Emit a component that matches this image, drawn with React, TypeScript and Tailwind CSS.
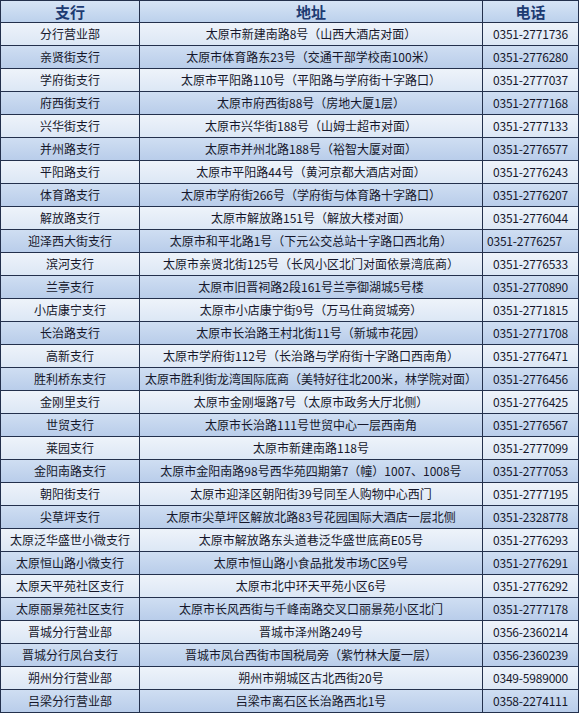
const branches: [string, string, string][] = [
  ["分行营业部", "太原市新建南路8号（山西大酒店对面）", "0351-2771736"],
  ["亲贤街支行", "太原市体育路东23号（交通干部学校南100米）", "0351-2776280"],
  ["学府街支行", "太原市平阳路110号（平阳路与学府街十字路口）", "0351-2777037"],
  ["府西街支行", "太原市府西街88号（房地大厦1层）", "0351-2777168"],
  ["兴华街支行", "太原市兴华街188号（山姆士超市对面）", "0351-2777133"],
  ["并州路支行", "太原市并州北路188号（裕智大厦对面）", "0351-2776577"],
  ["平阳路支行", "太原市平阳路44号（黄河京都大酒店对面）", "0351-2776243"],
  ["体育路支行", "太原市学府街266号（学府街与体育路十字路口）", "0351-2776207"],
  ["解放路支行", "太原市解放路151号（解放大楼对面）", "0351-2776044"],
  ["迎泽西大街支行", "太原市和平北路1号（下元公交总站十字路口西北角）", "0351-2776257"],
  ["滨河支行", "太原市亲贤北街125号（长风小区北门对面依景湾底商）", "0351-2776533"],
  ["兰亭支行", "太原市旧晋祠路2段161号兰亭御湖城5号楼", "0351-2770890"],
  ["小店康宁支行", "太原市小店康宁街9号（万马仕商贸城旁）", "0351-2771815"],
  ["长治路支行", "太原市长治路王村北街11号（新城市花园）", "0351-2771708"],
  ["高新支行", "太原市学府街112号（长治路与学府街十字路口西南角）", "0351-2776471"],
  ["胜利桥东支行", "太原市胜利街龙湾国际底商（美特好往北200米，林学院对面）", "0351-2776456"],
  ["金刚里支行", "太原市金刚堰路7号（太原市政务大厅北侧）", "0351-2776425"],
  ["世贸支行", "太原市长治路111号世贸中心一层西南角", "0351-2776567"],
  ["莱园支行", "太原市新建南路118号", "0351-2777099"],
  ["金阳南路支行", "太原市金阳南路98号西华苑四期第7（幢）1007、1008号", "0351-2777053"],
  ["朝阳街支行", "太原市迎泽区朝阳街39号同至人购物中心西门", "0351-2777195"],
  ["尖草坪支行", "太原市尖草坪区解放北路83号花园国际大酒店一层北侧", "0351-2328778"],
  ["太原泛华盛世小微支行", "太原市解放路东头道巷泛华盛世底商E05号", "0351-2776293"],
  ["太原恒山路小微支行", "太原市恒山路小食品批发市场C区9号", "0351-2776291"],
  ["太原天平苑社区支行", "太原市北中环天平苑小区6号", "0351-2776292"],
  ["太原丽景苑社区支行", "太原市长风西街与千峰南路交叉口丽景苑小区北门", "0351-2777178"],
  ["晋城分行营业部", "晋城市泽州路249号", "0356-2360214"],
  ["晋城分行凤台支行", "晋城市凤台西街市国税局旁（紫竹林大厦一层）", "0356-2360239"],
  ["朔州分行营业部", "朔州市朔城区古北西街20号", "0349-5989000"],
  ["吕梁分行营业部", "吕梁市离石区长治路西北1号", "0358-2274111"],
];

const font = "font-['Noto_Sans_CJK_SC',sans-serif]";

export default function App() {
  return (
    <div className={`w-[580px] h-[713px] bg-white ${font}`}>
      <div className="grid w-[579px] grid-cols-[138px_342px_95px] gap-px bg-[#23304c] p-px">
        {/* header */}
        {["支行", "地址", "电话"].map((h) => (
          <div
            key={h}
            className="flex h-[21px] items-center justify-center bg-gradient-to-b from-[#d6e4f5] to-[#bcd1ec] text-[15px] font-bold leading-none text-[#1d3b72]"
          >
            {h}
          </div>
        ))}

        {/* rows */}
        {branches.map(([name, addr, tel], i) => {
          const bg =
            i % 2 === 0
              ? "bg-gradient-to-b from-[#eef3fa] to-[#dce7f5]"
              : "bg-gradient-to-b from-[#cfdef2] to-[#b9cdea]";
          const cell = `flex h-[22px] items-center justify-center whitespace-nowrap text-[12px] leading-none text-[#15172b] ${bg}`;
          // the 迎泽西大街 number sits a little left in the original
          const telCell = i === 9 ? `${cell} pr-[12px]` : cell;
          return [
            <div key={`n${i}`} className={cell}>{name}</div>,
            <div key={`a${i}`} className={cell}>{addr}</div>,
            <div key={`t${i}`} className={`${telCell} tracking-[-0.2px]`}>{tel}</div>,
          ];
        })}
      </div>
    </div>
  );
}
